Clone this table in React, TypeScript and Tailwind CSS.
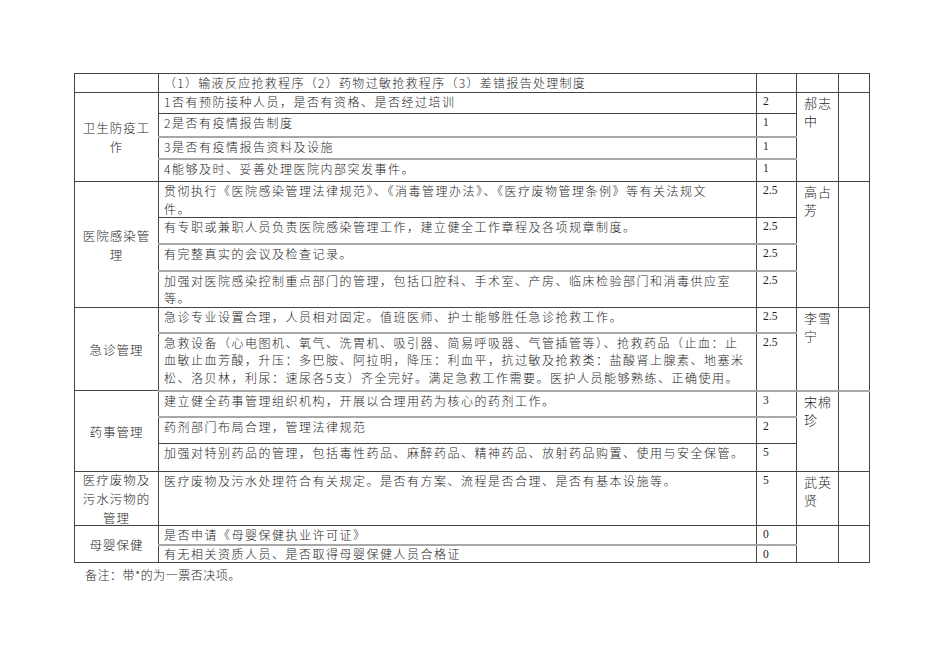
import * as React from "react";

interface Row {
  lines: string[];
  score: string;
  h: number;
  gray?: boolean;
  tight?: boolean;
  short?: boolean;
}

interface Group {
  cat: string[];
  name: string[];
  rows: Row[];
}

// h = row height as measured off the page (border-box of the cells)
const groups: Group[] = [
  {
    cat: [],
    name: [],
    rows: [
      {
        lines: ["（1）输液反应抢救程序（2）药物过敏抢救程序（3）差错报告处理制度"],
        score: "",
        h: 19,
        tight: true,
      },
    ],
  },
  {
    cat: ["卫生防疫工", "作"],
    name: ["郝志", "中"],
    rows: [
      { lines: ["1否有预防接种人员，是否有资格、是否经过培训"], score: "2", h: 21 },
      { lines: ["2是否有疫情报告制度"], score: "1", h: 23 },
      { lines: ["3是否有疫情报告资料及设施"], score: "1", h: 22, gray: true },
      { lines: ["4能够及时、妥善处理医院内部突发事件。"], score: "1", h: 23, gray: true },
    ],
  },
  {
    cat: ["医院感染管", "理"],
    name: ["高占", "芳"],
    rows: [
      {
        lines: [
          "贯彻执行《医院感染管理法律规范》、《消毒管理办法》、《医疗废物管理条例》等有关法规文",
          "件。",
        ],
        score: "2.5",
        h: 36,
      },
      {
        lines: ["有专职或兼职人员负责医院感染管理工作，建立健全工作章程及各项规章制度。"],
        score: "2.5",
        h: 26,
      },
      { lines: ["有完整真实的会议及检查记录。"], score: "2.5", h: 27, gray: true },
      {
        lines: [
          "加强对医院感染控制重点部门的管理，包括口腔科、手术室、产房、临床检验部门和消毒供应室",
          "等。",
        ],
        score: "2.5",
        h: 37,
        gray: true,
      },
    ],
  },
  {
    cat: ["急诊管理"],
    name: ["李雪", "宁"],
    rows: [
      {
        lines: ["急诊专业设置合理，人员相对固定。值班医师、护士能够胜任急诊抢救工作。"],
        score: "2.5",
        h: 25,
      },
      {
        lines: [
          "急救设备（心电图机、氧气、洗胃机、吸引器、简易呼吸器、气管插管等）、抢救药品（止血：止",
          "血敏止血芳酸，升压：多巴胺、阿拉明，降压：利血平，抗过敏及抢救类：盐酸肾上腺素、地塞米",
          "松、洛贝林，利尿：速尿各5支）齐全完好。满足急救工作需要。医护人员能够熟练、正确使用。",
        ],
        score: "2.5",
        h: 58,
        gray: true,
      },
    ],
  },
  {
    cat: ["药事管理"],
    name: ["宋棉", "珍"],
    rows: [
      {
        lines: ["建立健全药事管理组织机构，开展以合理用药为核心的药剂工作。"],
        score: "3",
        h: 26,
        gray: true,
      },
      { lines: ["药剂部门布局合理，管理法律规范"], score: "2", h: 27, gray: true },
      {
        lines: ["加强对特别药品的管理，包括毒性药品、麻醉药品、精神药品、放射药品购置、使用与安全保管。"],
        score: "5",
        h: 28,
      },
    ],
  },
  {
    cat: ["医疗废物及", "污水污物的", "管理"],
    name: ["武英", "贤"],
    rows: [
      {
        lines: ["医疗废物及污水处理符合有关规定。是否有方案、流程是否合理、是否有基本设施等。"],
        score: "5",
        h: 54,
      },
    ],
  },
  {
    cat: ["母婴保健"],
    name: [],
    rows: [
      { lines: ["是否申请《母婴保健执业许可证》"], score: "0", h: 19 },
      {
        lines: ["有无相关资质人员、是否取得母婴保健人员合格证"],
        score: "0",
        h: 18,
        gray: true,
        short: true,
      },
    ],
  },
];

const cjk = "font-['Noto_Sans_CJK_SC','Noto_Sans',sans-serif] font-light";

export default function App() {
  return (
    <div className="min-h-[672px] w-[950px] bg-white text-[#1e1e1e] pt-[73px]">
      <table className="ml-[74px] w-[795px] table-fixed border-collapse border border-[#444]">
        <colgroup>
          <col className="w-[84px]" />
          <col className="w-[598px]" />
          <col className="w-[40px]" />
          <col className="w-[42px]" />
          <col className="w-[31px]" />
        </colgroup>
        <tbody>
          {groups.map((g, gi) =>
            g.rows.map((r, ri) => {
              const top = r.gray
                ? "border-t-2 border-t-[#a8a8a8]"
                : "border-t border-t-[#444]";
              return (
                <tr key={`${gi}-${ri}`} style={{ height: r.h }}>
                  {ri === 0 && (
                    <td
                      rowSpan={g.rows.length}
                      className={`border border-[#444] align-middle text-center text-[12.5px] leading-[19px] tracking-[1px] ${cjk}`}
                    >
                      <div className="-my-[3px]">
                        {g.cat.map((c, i) => (
                          <div key={i}>{c}</div>
                        ))}
                      </div>
                    </td>
                  )}
                  <td
                    className={`border-x border-x-[#444] ${top} align-top pl-[5px] text-[12px] whitespace-nowrap ${r.short ? "leading-[16px]" : "leading-[17.5px]"} ${r.tight ? "tracking-[1.3px]" : "tracking-[1.5px]"} ${cjk}`}
                  >
                    {r.lines.map((l, i) => (
                      <div key={i}>{l}</div>
                    ))}
                  </td>
                  <td
                    className={`border-x border-x-[#444] ${top} align-top pl-[6px] pt-[1px] text-[11.5px] leading-[15px] font-['Liberation_Serif',serif]`}
                  >
                    {r.score}
                  </td>
                  {ri === 0 && (
                    <>
                      <td
                        rowSpan={g.rows.length}
                        className={`border border-[#444] ${r.gray ? "border-t-2 border-t-[#a8a8a8]" : ""} align-top pl-[7px] pt-[1px] text-[13px] leading-[18px] tracking-[1px] ${cjk}`}
                      >
                        {g.name.map((n, i) => (
                          <div key={i}>{n}</div>
                        ))}
                      </td>
                      <td
                        rowSpan={g.rows.length}
                        className={`border border-[#444] ${r.gray ? "border-t-2 border-t-[#a8a8a8]" : ""}`}
                      />
                    </>
                  )}
                </tr>
              );
            })
          )}
        </tbody>
      </table>
      <p className={`ml-[85px] mt-[3px] text-[12px] leading-[18px] tracking-[0.5px] ${cjk}`}>
        备注：带*的为一票否决项。
      </p>
    </div>
  );
}
